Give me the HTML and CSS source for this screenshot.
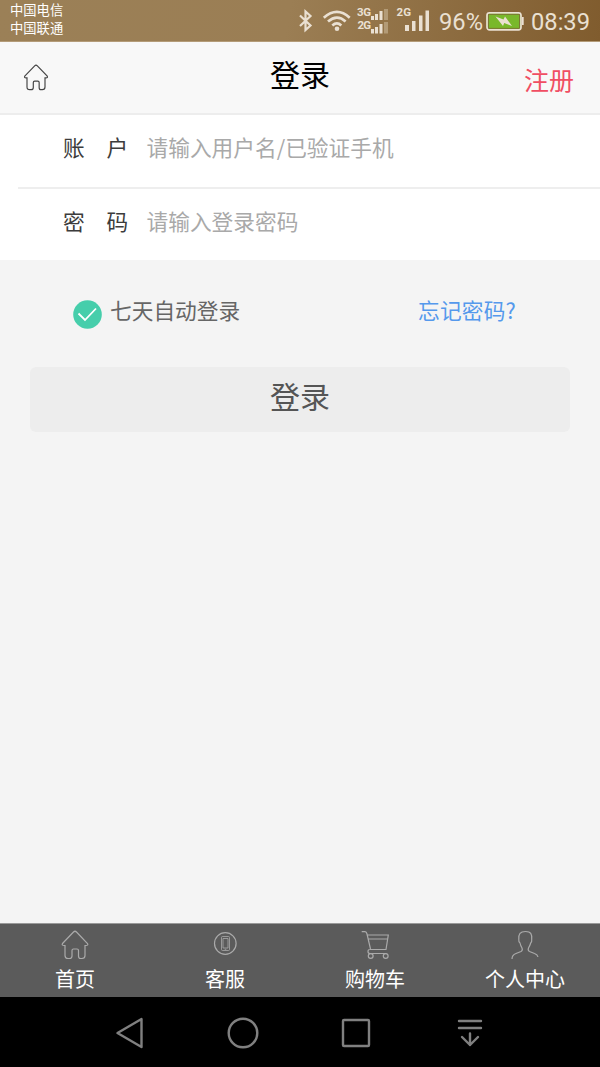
FILE: index.html
```html
<!DOCTYPE html>
<html lang="zh-CN">
<head>
<meta charset="utf-8">
<title>登录</title>
<link rel="stylesheet" href="styles.css">
</head>
<body>
<div class="screen">
  <div class="status">
    <div class="carriers"><span>中国电信</span><span>中国联通</span></div>
    <svg class="signals" width="136" height="41" viewBox="0 0 136 41">
      <path d="M4 15.500L14.500 25.500L9.500 30V11.500L14.500 16L4 26" fill="none" stroke="#eae0d2" stroke-width="2.200"/>
      <g fill="none" stroke="#eae0d2" stroke-width="2.700">
        <path d="M27.800 17.800Q41 6 53.700 17.800"/><path d="M32 21.500Q41 13.700 49.600 21.500"/><path d="M36.300 25.400Q41 21.300 45.300 25.400"/>
      </g>
      <circle cx="41" cy="28.800" r="2.300" fill="#eae0d2"/>
      <g class="net"><text x="61" y="16" textLength="14">3G</text><text x="61.500" y="29" textLength="13.500">2G</text><text x="100.500" y="16" textLength="14.500">2G</text></g>
      <path d="M75 16h3v4h-3zM79 14h3v6h-3zM83.500 11h3v9h-3zM75 29h3v4.500h-3zM79 27h3v6.500h-3zM83.500 24h3v9.500h-3zM109 25h4v6h-4zM116 21h3.500v10H116zM123 15.500h3.500V31H123zM129.500 10.500h3.500V31h-3.500z" fill="#eae0d2"/>
      <path d="M88 9h4v11h-4zM88 22h4v11.500h-4z" fill="#b39b77"/>
    </svg>
    <span class="percent">96%</span>
    <svg class="battery" width="38" height="41" viewBox="0 0 38 41">
      <rect x="1" y="12.800" width="34" height="17" rx="2.500" fill="#79b82b" stroke="#eae0d2" stroke-width="1.700"/>
      <path d="M36 17h1.700v8H36z" fill="#eae0d2"/>
      <rect x="2.600" y="14.300" width="30.800" height="14" fill="none" stroke="#7b6937" stroke-width=".8"/>
      <path d="M9.500 16.500L17.500 19.500L19 16.500L26 26L18.200 23L17 26Z" fill="#eae0d2"/>
    </svg>
    <time class="clock">08:39</time>
  </div>

  <header class="header">
    <svg width="26" height="27" viewBox="0 0 28 30"><path class="line" d="M1.500 13.500L12.500 2Q14 .5 15.500 2L26.500 13.500Q27.500 15.500 25 15.500H24V25.500Q24 28.500 21 28.500H19.500Q17.500 28.500 17.500 26V20.500Q17.500 19 16 19H12.500Q11 19 11 20.500V26Q11 28.500 8.500 28.500H7Q4 28.500 4 25.500V15.500H3Q.5 15.500 1.500 13.500Z"/></svg>
    <h1>登录</h1>
    <a>注册</a>
  </header>

  <main class="main">
    <div class="fields">
      <label class="field"><span class="name"><b>账</b><b>户</b></span><span class="hint">请输入用户名/已验证手机</span></label>
      <label class="field"><span class="name"><b>密</b><b>码</b></span><span class="hint">请输入登录密码</span></label>
    </div>
    <div class="options">
      <svg width="29" height="29" viewBox="0 0 29 29"><circle cx="14.500" cy="14.500" r="14.300" fill="#46ceab"/><path d="M5.500 13.500l6.500 6.500L23 8.500" fill="none" stroke="#fff" stroke-width="1.800"/></svg>
      <span class="remember">七天自动登录</span>
      <a class="forgot">忘记密码?</a>
    </div>
    <button class="submit">登录</button>
  </main>

  <nav class="tabs">
    <a class="tab"><svg width="28" height="30" viewBox="0 0 28 30"><path class="line" d="M1.500 13.500L12.500 2Q14 .5 15.500 2L26.500 13.500Q27.500 15.500 25 15.500H24V25.500Q24 28.500 21 28.500H19.500Q17.500 28.500 17.500 26V20.500Q17.500 19 16 19H12.500Q11 19 11 20.500V26Q11 28.500 8.500 28.500H7Q4 28.500 4 25.500V15.500H3Q.5 15.500 1.500 13.500Z"/></svg><span>首页</span></a>
    <a class="tab"><svg width="28" height="30" viewBox="0 0 28 30"><g class="line"><circle cx="14.300" cy="13.500" r="10.800"/><g class="thin"><rect x="10.500" y="6.500" width="8" height="14" rx="1"/><path d="M12 8.500h5v9.500h-5zM13.700 19.300h1.600"/></g></g></svg><span>客服</span></a>
    <a class="tab"><svg width="28" height="30" viewBox="0 0 28 30"><g class="line"><path d="M.7 1.700H4Q5.500 1.700 6 4L9.500 19M6.500 5H27.300L25 19.500H9Q7 19.500 7 21.500T9 23.500H25.500M7.300 9H26.500"/><circle cx="9.700" cy="26" r="2.400"/><circle cx="24.700" cy="26" r="2.400"/></g></svg><span>购物车</span></a>
    <a class="tab"><svg width="28" height="30" viewBox="0 0 28 30"><path class="line" d="M1 29Q1 25 5 23.500L10 21.500Q12 20.500 11 18Q9.500 15.500 9 13Q7.500 12 7.800 9.500C7.500 4 9 1.500 14.500 1.500S21 4 20.700 9.500Q21 12 19.700 13Q19 15.500 17.500 18Q16.500 20.500 18.500 21.500L23.500 23.500Q26.500 24.500 27 27"/></svg><span>个人中心</span></a>
  </nav>

  <div class="system">
    <svg width="32" height="34" viewBox="0 0 32 34"><path d="M3.500 17L27.500 3V31Z"/></svg>
    <svg width="34" height="34" viewBox="0 0 34 34"><circle cx="17" cy="17" r="14.300"/></svg>
    <svg width="32" height="34" viewBox="0 0 32 34"><rect x="3" y="4" width="26" height="26" rx="1"/></svg>
    <svg width="36" height="34" viewBox="-4 0 36 34"><path d="M3 5H25M3 12H25M14 17.500V29M6 21l8 8 8-8"/></svg>
  </div>
</div>
</body>
</html>
```
FILE: styles.css
```css
* { box-sizing: border-box; }
body { margin: 0; }
svg { display: block; flex: none; }
.screen {
  width: 600px; height: 1067px; overflow: hidden;
  display: flex; flex-direction: column;
  background: #f4f4f4;
  font-family: "Noto Sans CJK SC", sans-serif;
}
.status {
  height: 42px; flex: none;
  display: flex; align-items: flex-start;
  padding: 0 9px 0 10px;
  border-bottom: 1px solid #b49c79;
  background: linear-gradient(100deg, #9b8057 0%, #9b7e54 48%, #805c2e 100%);
  color: #eae0d2;
}
.carriers { width: 286px; flex: none; display: flex; flex-direction: column; font-size: 13.300px; line-height: 18px; padding-top: 1px; color: #fff; }
.net { font: bold 11.500px Roboto, sans-serif; fill: #eae0d2; }
.percent, .clock { flex: none; font-family: Roboto, sans-serif; font-size: 23.700px; line-height: 44px; }
.percent { width: 46.500px; margin-left: 7px; }
.battery { margin-left: .5px; }
.clock { margin-left: 7px; white-space: nowrap; }
.line { fill: none; stroke: currentColor; stroke-width: 1.300; }

.header {
  height: 73px; flex: none;
  display: grid; grid-template-columns: 150px 1fr 150px;
  padding: 0 26px 0 23px;
  border-bottom: 2px solid #ededed;
  background: #f8f8f8;
  color: #444;
}
.header svg { margin-top: 22px; }
.header h1 { margin: 0; text-align: center; font-size: 30px; font-weight: 400; line-height: 62px; color: #000; padding-left: 3px; }
.header a { text-align: right; font-size: 25px; line-height: 75px; color: #f04e63; }

.main { flex: 1; }
.fields { background: #fff; height: 145px; }
.field { display: flex; height: 73px; margin-left: 18px; padding-left: 45px; font-size: 21.700px; line-height: 64px; }
.field:first-child { border-bottom: 2px solid #eee; height: 74px; }
.name { width: 83.500px; display: flex; gap: 21.700px; color: #3c3c3c; }
.name b { font-weight: 400; }
.hint { color: #a9a9a9; }
.options { display: flex; padding: 39px 82px 0 73px; height: 107px; font-size: 21.700px; line-height: 22px; }
.options svg { margin-top: 1px; }
.remember { margin-left: 8px; color: #666; }
.forgot { width: 100px; margin-left: auto; color: #5599ec; letter-spacing: .2px; }
.submit {
  display: block; width: 540px; height: 65px; margin: 0 30px; padding: 0 0 9px;
  border: 0; border-radius: 6px; background: #ededed;
  font: 30px/56px "Noto Sans CJK SC", sans-serif; color: #555;
}

.tabs { height: 74px; flex: none; display: grid; grid-template-columns: repeat(4, 1fr); background: #5b5b5b; border-top: 1px solid #999; }
.tab { display: flex; flex-direction: column; align-items: center; padding-top: 6px; color: #aaa; }
.tab span { font-size: 20px; line-height: 26px; margin-top: 6px; color: #fff; }
.tab .line { stroke-width: 1.200; }
.tab .thin { stroke-width: .8; }

.system { height: 70px; flex: none; display: flex; gap: 80px; padding: 19px 0 0 114px; background: #000; }
.system svg { fill: none; stroke: #808080; stroke-width: 2.400; stroke-linecap: round; stroke-linejoin: round; }
```
